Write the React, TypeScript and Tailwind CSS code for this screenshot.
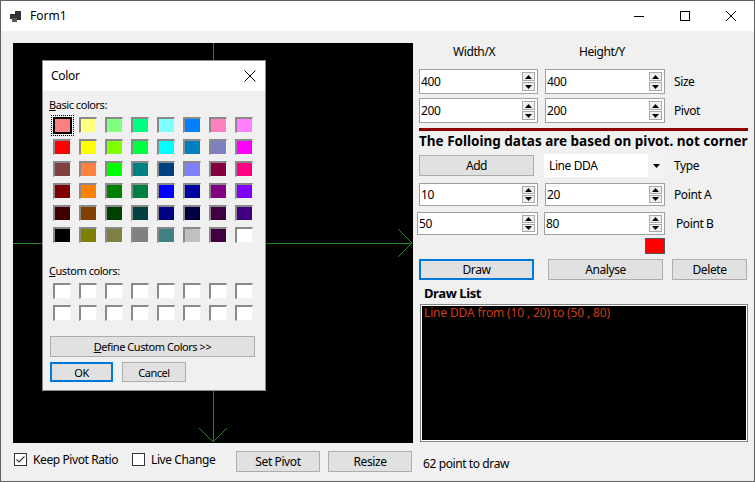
import React from "react";

const basicColors = [
  ["#FF8080", "#FFFF80", "#80FF80", "#00FF80", "#80FFFF", "#0080FF", "#FF80C0", "#FF80FF"],
  ["#FF0000", "#FFFF00", "#80FF00", "#00FF40", "#00FFFF", "#0080C0", "#8080C0", "#FF00FF"],
  ["#804040", "#FF8040", "#00FF00", "#008080", "#004080", "#8080FF", "#800040", "#FF0080"],
  ["#800000", "#FF8000", "#008000", "#008040", "#0000FF", "#0000A0", "#800080", "#8000FF"],
  ["#400000", "#804000", "#004000", "#004040", "#000080", "#000040", "#400040", "#400080"],
  ["#000000", "#808000", "#808040", "#808080", "#408080", "#C0C0C0", "#400040", "#FFFFFF"],
];

function Swatch({ color, selected }: { color: string; selected?: boolean }) {
  return (
    <div
      className="relative w-[18px] h-[16px] border-t-2 border-l-2 border-r border-b border-t-[#8a8a8a] border-l-[#8a8a8a] border-r-[#f4f4f4] border-b-[#f4f4f4]"
      style={{ backgroundColor: color }}
    >
      {selected && (
        <>
          <div className="absolute -inset-[2px] border-2 border-black" />
          <div className="absolute -inset-[4px] border border-dotted border-black" />
        </>
      )}
    </div>
  );
}

function WinButton({
  label,
  w,
  h = "h-[21px]",
  focused,
  children,
}: {
  label?: string;
  w: string;
  h?: string;
  focused?: boolean;
  children?: React.ReactNode;
}) {
  return (
    <div
      className={`${w} ${h} flex items-center justify-center bg-[#e1e1e1] ${
        focused ? "border-2 border-[#0078d7]" : "border border-[#adadad]"
      }`}
    >
      {children ?? label}
    </div>
  );
}

function Spinner() {
  return (
    <div className="w-[13px] flex flex-col gap-[1px] my-[2px] mr-[2px]">
      <div className="flex-1 flex items-center justify-center bg-[#f0f0f0] border border-[#a8a8a8]">
        <svg width="7" height="4" viewBox="0 0 7 4">
          <path d="M0 4 L3.5 0 L7 4 Z" fill="#000" />
        </svg>
      </div>
      <div className="flex-1 flex items-center justify-center bg-[#f0f0f0] border border-[#a8a8a8]">
        <svg width="7" height="4" viewBox="0 0 7 4">
          <path d="M0 0 L3.5 4 L7 0 Z" fill="#000" />
        </svg>
      </div>
    </div>
  );
}

function NumBox({ value, w, h }: { value: string; w: string; h: string }) {
  return (
    <div className={`${w} ${h} flex bg-white border border-[#a0a0a0]`}>
      <div className="flex-1 flex items-center pl-[1px]">{value}</div>
      <Spinner />
    </div>
  );
}

function CheckBox({ checked, label }: { checked?: boolean; label: string }) {
  return (
    <div className="flex items-center gap-[6px]">
      <div className="w-[13px] h-[13px] bg-white border border-[#333] flex items-center justify-center">
        {checked && (
          <svg width="11" height="11" viewBox="0 0 11 11">
            <path d="M1.5 5.5 L4 8 L9.5 2.5" stroke="#333" strokeWidth="1.1" fill="none" />
          </svg>
        )}
      </div>
      <span>{label}</span>
    </div>
  );
}

function TitleBar() {
  return (
    <div className="h-[30px] bg-white flex items-center tracking-normal">
      <svg width="12" height="11" viewBox="0 0 12 11" className="ml-[9px]">
        <rect x="5" y="0" width="6" height="9" fill="#333" />
        <rect x="0" y="3" width="5" height="5" fill="#333" />
        <rect x="2" y="7" width="5" height="4" fill="#555" />
      </svg>
      <span className="ml-[8px]">Form1</span>
      <div className="ml-auto flex h-full">
        <div className="w-[46px] flex items-center justify-center">
          <svg width="10" height="10" viewBox="0 0 10 10">
            <path d="M0 5.5 H10" stroke="#000" strokeWidth="1" />
          </svg>
        </div>
        <div className="w-[46px] flex items-center justify-center">
          <svg width="10" height="10" viewBox="0 0 10 10">
            <rect x="0.5" y="0.5" width="9" height="9" stroke="#000" strokeWidth="1" fill="none" />
          </svg>
        </div>
        <div className="w-[46px] flex items-center justify-center">
          <svg width="10" height="10" viewBox="0 0 10 10">
            <path d="M0 0 L10 10 M10 0 L0 10" stroke="#000" strokeWidth="1" />
          </svg>
        </div>
      </div>
    </div>
  );
}

function Canvas() {
  const green = "#1f8a1f";
  return (
    <div className="w-[400px] h-[400px] bg-black">
      <svg width="400" height="400" viewBox="0 0 400 400">
        <path d="M0 200.5 H399" stroke={green} strokeWidth="1" />
        <path d="M385 186 L399 200 L385 214" stroke={green} strokeWidth="1" fill="none" />
        <path d="M200.5 0 V399" stroke={green} strokeWidth="1" />
        <path d="M186 385 L200 399 L214 385" stroke={green} strokeWidth="1" fill="none" />
      </svg>
    </div>
  );
}

function ColorDialog() {
  return (
    <div className="absolute left-[41px] top-[59px] w-[224px] h-[331px] border border-[#8c8c8c] bg-[#f0f0f0] flex flex-col text-[11px] tracking-[-0.45px] shadow-[0_0_6px_rgba(0,0,0,0.25)]">
      <div className="h-[30px] bg-white flex items-center pl-[8px] pr-[9px] text-[12px] tracking-[-0.3px]">
        <span>Color</span>
        <svg width="12" height="12" viewBox="0 0 12 12" className="ml-auto">
          <path d="M0.5 0.5 L11.5 11.5 M11.5 0.5 L0.5 11.5" stroke="#000" strokeWidth="1" />
        </svg>
      </div>
      <div className="pl-[6px] mt-[5px] h-[16px] flex items-center">
        <span>
          <u>B</u>asic colors:
        </span>
      </div>
      <div className="ml-[10px] mt-[5px] grid grid-cols-[repeat(8,18px)] gap-x-[8px] gap-y-[6px]">
        {basicColors.flatMap((row, r) =>
          row.map((c, i) => <Swatch key={`${r}-${i}`} color={c} selected={r === 0 && i === 0} />)
        )}
      </div>
      <div className="pl-[6px] mt-[19px] h-[16px] flex items-center">
        <span>
          <u>C</u>ustom colors:
        </span>
      </div>
      <div className="ml-[10px] mt-[5px] grid grid-cols-[repeat(8,18px)] gap-x-[8px] gap-y-[6px]">
        {Array.from({ length: 16 }).map((_, i) => (
          <Swatch key={i} color="#FFFFFF" />
        ))}
      </div>
      <div className="ml-[7px] mt-[15px]">
        <WinButton w="w-[205px]">
          <span>
            <u>D</u>efine Custom Colors &gt;&gt;
          </span>
        </WinButton>
      </div>
      <div className="ml-[7px] mt-[5px] flex gap-[9px]">
        <WinButton label="OK" w="w-[63px]" h="h-[20px]" focused />
        <WinButton label="Cancel" w="w-[64px]" h="h-[20px]" />
      </div>
    </div>
  );
}

function RightPane() {
  return (
    <div className="pl-[6px] flex flex-col">
      <div className="mt-[13px] h-[16px] flex items-center">
        <span className="ml-[34px] w-[126px]">Width/X</span>
        <span>Height/Y</span>
      </div>

      <div className="mt-[9px] flex items-center">
        <NumBox value="400" w="w-[119px]" h="h-[25px]" />
        <div className="ml-[7px]">
          <NumBox value="400" w="w-[120px]" h="h-[25px]" />
        </div>
        <span className="ml-[9px]">Size</span>
      </div>
      <div className="mt-[4px] flex items-center">
        <NumBox value="200" w="w-[119px]" h="h-[25px]" />
        <div className="ml-[7px]">
          <NumBox value="200" w="w-[120px]" h="h-[25px]" />
        </div>
        <span className="ml-[9px]">Pivot</span>
      </div>

      <div className="mt-[5px] w-[329px] h-[3px] bg-[#8b0000]" />
      <div className="mt-[3px] h-[16px] flex items-center font-bold text-[13.5px] tracking-normal">
        The Folloing datas are based on pivot. not corner
      </div>

      <div className="mt-[4px] h-[23px] flex items-center">
        <WinButton label="Add" w="w-[115px]" />
        <div className="ml-[10px] w-[120px] h-[23px] bg-white flex items-center">
          <span className="pl-[5px] flex-1">Line DDA</span>
          <div className="w-[16px] h-full bg-[#f2f2f2] flex items-center justify-center">
            <svg width="7" height="4" viewBox="0 0 7 4">
              <path d="M0 0 L3.5 4 L7 0 Z" fill="#000" />
            </svg>
          </div>
        </div>
        <span className="ml-[10px]">Type</span>
      </div>

      <div className="mt-[6px] flex items-center">
        <NumBox value="10" w="w-[119px]" h="h-[23px]" />
        <div className="ml-[7px]">
          <NumBox value="20" w="w-[120px]" h="h-[23px]" />
        </div>
        <span className="ml-[9px]">Point A</span>
      </div>
      <div className="mt-[6px] flex items-center -ml-[2px]">
        <NumBox value="50" w="w-[121px]" h="h-[23px]" />
        <div className="ml-[6px]">
          <NumBox value="80" w="w-[121px]" h="h-[23px]" />
        </div>
        <span className="ml-[11px]">Point B</span>
      </div>

      <div className="mt-[3px] ml-[226px] w-[20px] h-[16px] bg-[#ff0000] border border-[#555]" />

      <div className="mt-[5px] flex">
        <WinButton label="Draw" w="w-[115px]" focused />
        <div className="ml-[14px]">
          <WinButton label="Analyse" w="w-[115px]" />
        </div>
        <div className="ml-[9px]">
          <WinButton label="Delete" w="w-[75px]" />
        </div>
      </div>

      <div className="mt-[5px] h-[16px] flex items-center font-bold text-[13px] ml-[5px]">Draw List</div>

      <div className="mt-[3px] ml-[1px] w-[328px] h-[138px] bg-black border border-[#828282] outline outline-1 -outline-offset-2 outline-white">
        <div className="pl-[3px] pt-[2px] text-[#cc3d12] tracking-[-0.15px]">
          Line DDA from (10 , 20) to (50 , 80)
        </div>
      </div>

      <div className="mt-[14px] ml-[4px] h-[16px] flex items-center">62 point to draw</div>
    </div>
  );
}

export default function App() {
  return (
    <div className="relative w-[755px] h-[482px] overflow-hidden border border-[#5f5f5f] bg-[#f0f0f0] text-black text-[12px] leading-none tracking-[-0.4px] font-['Noto_Sans','Open_Sans',sans-serif]">
      <TitleBar />
      <div className="flex">
        <div className="pl-[12px] pt-[12px] flex flex-col">
          <Canvas />
          <div className="mt-[8px] h-[21px] flex items-start">
            <div className="ml-[1px] w-[118px] mt-[2px]">
              <CheckBox checked label="Keep Pivot Ratio" />
            </div>
            <div className="w-[104px] mt-[2px]">
              <CheckBox label="Live Change" />
            </div>
            <WinButton label="Set Pivot" w="w-[84px]" />
            <div className="ml-[8px]">
              <WinButton label="Resize" w="w-[84px]" />
            </div>
          </div>
        </div>
        <RightPane />
      </div>
      <ColorDialog />
    </div>
  );
}
